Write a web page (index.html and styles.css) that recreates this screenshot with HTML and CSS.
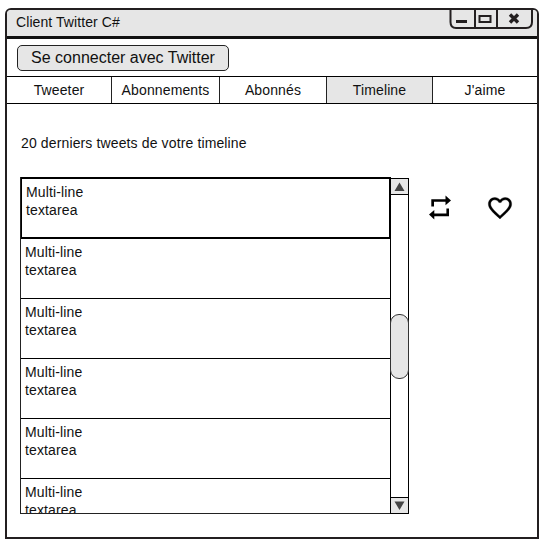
FILE: index.html
```html
<!DOCTYPE html>
<html lang="fr">
<head>
<meta charset="utf-8">
<title>Client Twitter C#</title>
<link rel="stylesheet" href="styles.css">
</head>
<body>
<main class="window">
  <header class="titlebar">
    <h1 class="title">Client Twitter C#</h1>
    <svg class="controls" width="85" height="21" viewBox="0 0 85 21" fill="none" stroke="#231f20" stroke-width="2">
      <path d="M1.5 -1V12Q1.5 18 7 18H77Q83 18 83 12V-1M26 -1V18M48 -1V18"/>
      <path d="M7 11.5H18" stroke-width="3"/>
      <rect x="30.5" y="6" width="11" height="6"/>
      <path d="M61 4.5L69 12.5M69 4.5L61 12.5" stroke-width="3.4"/>
    </svg>
  </header>
  <div class="toolbar"><button class="connect">Se connecter avec Twitter</button></div>
  <nav class="tabs">
    <a class="tab tab-first"><span>Tweeter</span></a>
    <a class="tab"><span>Abonnements</span></a>
    <a class="tab"><span>Abonnés</span></a>
    <a class="tab tab-active"><span>Timeline</span></a>
    <a class="tab"><span>J'aime</span></a>
  </nav>
  <section class="content">
    <p class="caption">20 derniers tweets de votre timeline</p>
    <div class="row">
      <div class="list">
        <div class="tweet tweet-selected">Multi-line<br>textarea</div>
        <div class="tweet">Multi-line<br>textarea</div>
        <div class="tweet">Multi-line<br>textarea</div>
        <div class="tweet">Multi-line<br>textarea</div>
        <div class="tweet">Multi-line<br>textarea</div>
        <div class="tweet">Multi-line<br>textarea</div>
      </div>
      <div class="scrollbar">
        <div class="arrow arrow-up"><svg width="17" height="15"><path d="M3.5 12L8.5 3.5L13.5 12Z" fill="#444"/></svg></div>
        <div class="thumb"></div>
        <div class="arrow arrow-down"><svg width="17" height="15"><path d="M3.5 3.5L8.5 12L13.5 3.5Z" fill="#444"/></svg></div>
      </div>
      <div class="actions">
        <svg class="retweet" width="24" height="26" viewBox="0 0 24 26"><path d="M3.3 11.5V4.2H17.5V.6L23 5.5L17.5 10.2V6.8H6V11.5ZM21 13.5V21.2H6.3V24.4L1 19.6L6.3 15V18.4H18.4V13.5Z"/></svg>
        <svg class="like" width="28" height="28" viewBox="0 0 24 24"><path stroke="#000" stroke-width=".3" d="M16.5 3c-1.74 0-3.41.81-4.5 2.09C10.91 3.81 9.24 3 7.5 3 4.42 3 2 5.42 2 8.5c0 3.78 3.4 6.86 8.55 11.54L12 21.35l1.45-1.32C18.6 15.36 22 12.28 22 8.5 22 5.42 19.58 3 16.5 3zm-4.4 15.55l-.1.1-.1-.1C7.14 14.24 4 11.39 4 8.5 4 6.5 5.5 5 7.5 5c1.54 0 3.04.99 3.57 2.36h1.87C13.46 5.99 14.96 5 16.5 5c2 0 3.5 1.5 3.5 3.5 0 2.89-3.14 5.74-7.9 10.05z"/></svg>
      </div>
    </div>
  </section>
</main>
</body>
</html>
```
FILE: styles.css
```css
* { box-sizing: border-box; }
body { margin: 0; padding: 8px 0 0 5px; background: #fff; color: #111; font: 14px/18px "Liberation Sans", Arial, sans-serif; letter-spacing: .13px; }
.window { width: 534px; height: 531px; border: 2px solid #231f20; border-radius: 6px 6px 0 0; overflow: hidden; }
.titlebar { display: flex; justify-content: space-between; height: 29px; background: #e6e6e6; border-bottom: 3px solid #111; }
.title { margin: 3px 0 0 9px; font-size: 14px; font-weight: 400; line-height: 18px; letter-spacing: .08px; }
.controls { margin-right: 3px; }
.toolbar { height: 37px; padding: 6px 0 0 10px; }
.connect { display: block; width: 212px; height: 26px; padding: 0; border: 1px solid #222; border-radius: 5px; background: #e6e6e6; color: #111; font: 16px/24px "Liberation Sans", Arial, sans-serif; }
.tabs { display: grid; grid-template-columns: 104px 108px 107px 106px 105px; height: 28px; border: solid #000; border-width: 1px 0; }
.tab { border-left: 1px solid #222; text-align: center; line-height: 26px; }
.tab-first { border-left: 0; }
.tab-active { background: #e6e6e6; }
.content { padding: 30px 0 0 13px; }
.caption { margin: 0 0 25px 1px; }
.row { display: flex; height: 337px; }
.list { width: 371px; height: 337px; margin-right: -1px; border: 1px solid #222; border-width: 0 0 1px 1px; overflow: hidden; }
.tweet { height: 60px; padding: 4px 0 0 4px; border-bottom: 1px solid #000; }
.tweet-selected { height: 62px; border: 2px solid #000; border-left-width: 1px; }
.scrollbar { display: flex; flex-direction: column; width: 19px; height: 336px; margin-top: 1px; border: 1px solid #000; }
.arrow { height: 16px; background: #e6e6e6; }
.arrow svg { display: block; }
.arrow-up { border-bottom: 1px solid #000; }
.arrow-down { margin-top: auto; border-top: 1px solid #000; }
.thumb { height: 65px; margin: 119px -1px 0; border: 1px solid #333; border-radius: 9px; background: #e6e6e6; }
.actions { display: flex; padding: 18px 0 0 19px; }
.like { margin: -1px 0 0 34px; }
```
